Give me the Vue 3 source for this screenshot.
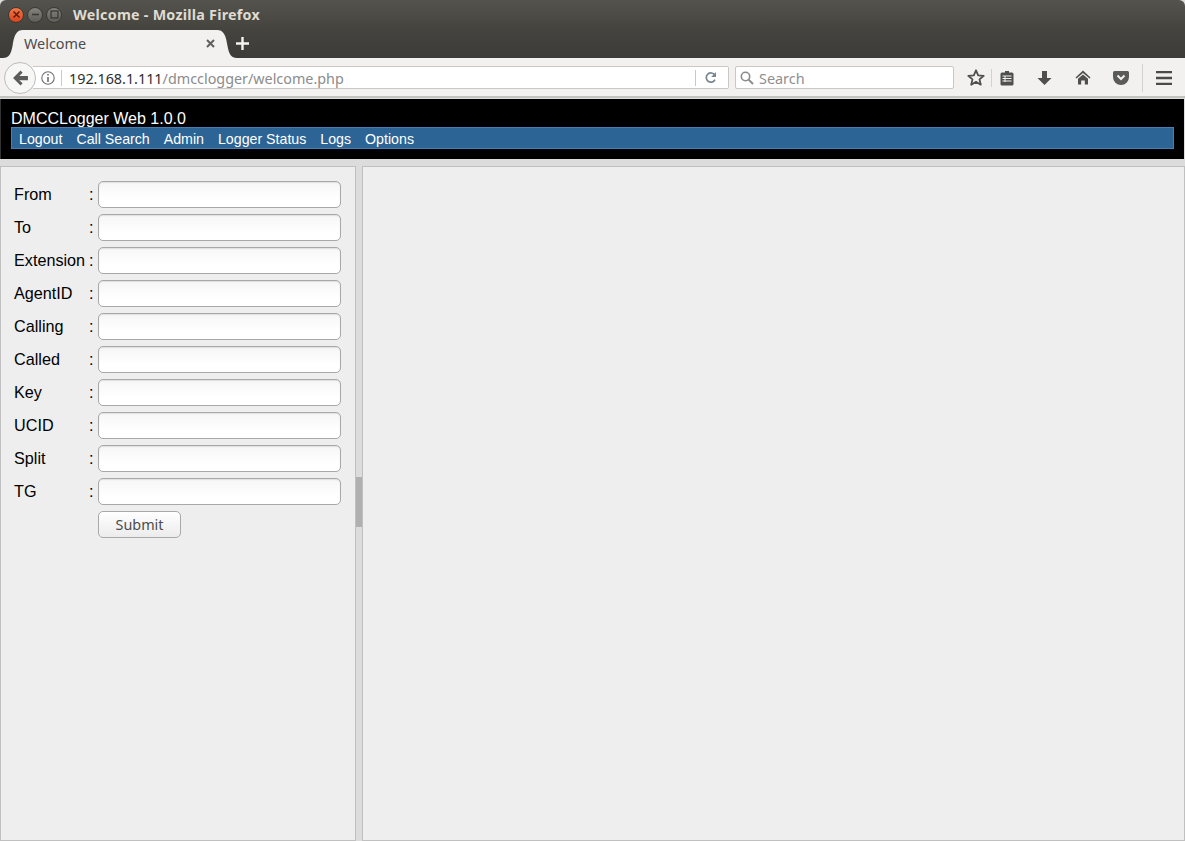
<template>
  <div class="page">
    <div class="titlebar">
      <div class="win-buttons">
        <span class="win-btn close">
          <svg width="9" height="9" viewBox="0 0 9 9"><path d="M1.500 1.500l6 6M7.500 1.500l-6 6" stroke="#5e1c08" stroke-width="1.500" /></svg>
        </span>
        <span class="win-btn">
          <svg width="9" height="9" viewBox="0 0 9 9"><path d="M1 4.500h7" stroke="#3a3935" stroke-width="1.600" /></svg>
        </span>
        <span class="win-btn">
          <svg width="9" height="9" viewBox="0 0 9 9"><rect x="1" y="1" width="7" height="7" fill="none" stroke="#3a3935" stroke-width="1.300" /></svg>
        </span>
      </div>
      <span class="win-title">Welcome - Mozilla Firefox</span>
    </div>

    <div class="tabbar">
      <div class="tab">
        <svg class="tab-curve" width="20" height="28" viewBox="0 0 20 28"><path d="M0 28C6 28 8 24 9.500 16 11 6 13 0 20 0V28Z" fill="#f2f1f0" /></svg>
        <div class="tab-body">
          <span class="tab-label">Welcome</span>
          <svg width="9" height="9" viewBox="0 0 9 9"><path d="M1 1l7 7M8 1l-7 7" stroke="#5f5f5c" stroke-width="2" /></svg>
        </div>
        <svg class="tab-curve" width="20" height="28" viewBox="0 0 20 28"><path d="M20 28C14 28 12 24 10.500 16 9 6 7 0 0 0V28Z" fill="#f2f1f0" /></svg>
      </div>
      <svg class="new-tab" width="13" height="13" viewBox="0 0 13 13"><path d="M6.500 0v13M0 6.500h13" stroke="#f4f4f2" stroke-width="2.400" /></svg>
    </div>

    <div class="navbar">
      <div class="back-btn">
        <svg width="17" height="16" viewBox="0 0 16 15"><path d="M8 0.500 1 7.500 8 14.500 10 12.500 6.800 9.500H15V5.500H6.800L10 2.500Z" fill="#5c5c5c" /></svg>
      </div>
      <div class="urlbar">
        <svg class="info" width="14" height="14" viewBox="0 0 14 14">
          <circle cx="7" cy="7" r="6.200" fill="none" stroke="#6e6e6e" stroke-width="1.100" />
          <path d="M6.200 3h1.600v1.600H6.200zM6.200 6h1.600v5H6.200z" fill="#6e6e6e" />
        </svg>
        <span class="sep"></span>
        <span class="url"><span class="host">192.168.1.111</span>/dmcclogger/welcome.php</span>
        <span class="sep right"></span>
        <svg class="reload" width="13" height="13" viewBox="0 0 13 13">
          <path d="M10.800 4.200A4.600 4.600 0 1 0 11 8.600" fill="none" stroke="#7a8791" stroke-width="1.700" />
          <path d="M12 1v5H7.200Z" fill="#7a8791" />
        </svg>
      </div>
      <div class="searchbar">
        <svg width="14" height="14" viewBox="0 0 14 14">
          <circle cx="5.500" cy="5.500" r="4.200" fill="none" stroke="#8a8a8a" stroke-width="1.600" />
          <path d="M8.600 8.600l4.400 4.400" stroke="#8a8a8a" stroke-width="2" />
        </svg>
        <span class="search-text">Search</span>
      </div>
      <div class="tools">
        <svg class="t-star" width="18" height="17" viewBox="0 0 18 17"><path d="M9 1.300 11.200 6.300 16.700 6.800 12.500 10.400 13.800 15.700 9 12.900 4.200 15.700 5.500 10.400 1.300 6.800 6.800 6.300Z" fill="none" stroke="#4f4f4f" stroke-width="1.800" stroke-linejoin="round" /></svg>
        <span class="t-sep"></span>
        <svg class="t-list" width="14" height="16" viewBox="0 0 14 16">
          <path d="M2 2.500h3V1h4v1.500h3a1.500 1.500 0 0 1 1.500 1.500v10a1.500 1.500 0 0 1-1.500 1.500H2A1.500 1.500 0 0 1 .5 14V4A1.500 1.500 0 0 1 2 2.500Z" fill="#4f4f4f" />
          <path d="M2.500 5.500h9v1h-9zM2.500 8h9v1h-9zM2.500 10.500h9v1h-9zM4.500 5.500h1v6.500h-1z" fill="#f2f1f0" />
        </svg>
        <svg class="t-down" width="15" height="16" viewBox="0 0 15 16"><path d="M5 1h5v7h4.500L7.500 15 .5 8H5Z" fill="#4f4f4f" /></svg>
        <svg class="t-home" width="16" height="15" viewBox="0 0 16 15">
          <path d="M8 .5 15.500 7.500 14.500 8.500 8 3 1.500 8.500.5 7.500Z" fill="#4f4f4f" />
          <path d="M8 4.500 13 8.800V14.500H9.800V10.500H6.200V14.500H3V8.800Z" fill="#4f4f4f" />
        </svg>
        <svg class="t-pocket" width="16" height="14" viewBox="0 0 16 14">
          <path d="M1.500 0h13A1.500 1.500 0 0 1 16 1.500V6a8 8 0 0 1-16 0V1.500A1.500 1.500 0 0 1 1.500 0Z" fill="#5a5a5a" />
          <path d="M4.500 4.500 8 8l3.500-3.500" fill="none" stroke="#f2f1f0" stroke-width="2" />
        </svg>
        <span class="t-sep wide"></span>
        <svg class="t-menu" width="16" height="14" viewBox="0 0 16 14"><path d="M0 1.200h16M0 7h16M0 12.800h16" stroke="#4a4a4a" stroke-width="2.300" /></svg>
      </div>
    </div>

    <div class="content">
      <header class="app-header">
        <div class="app-title">DMCCLogger Web 1.0.0</div>
        <nav class="menu">
          <a v-for="item in menu" :key="item">{{ item }}</a>
        </nav>
      </header>

      <div class="panes">
        <form class="left-pane" @submit.prevent>
          <div v-for="f in fields" :key="f" class="form-row">
            <label>{{ f }}</label>
            <span class="colon">:</span>
            <input type="text">
          </div>
          <button type="submit" class="submit">Submit</button>
        </form>
        <div class="splitter"><span class="grip"></span></div>
        <div class="right-pane"></div>
      </div>
    </div>
  </div>
</template>

<script setup>
const menu = ['Logout', 'Call Search', 'Admin', 'Logger Status', 'Logs', 'Options']
const fields = ['From', 'To', 'Extension', 'AgentID', 'Calling', 'Called', 'Key', 'UCID', 'Split', 'TG']
</script>

<style>
html, body {
  margin: 0;
  height: 100%;
  overflow: hidden;
}
</style>

<style scoped>
.page {
  width: 1185px;
  height: 841px;
  display: flex;
  flex-direction: column;
  background: #dcdcdc;
  font-family: "Liberation Sans", Arial, sans-serif;
  overflow: hidden;
}

.titlebar {
  height: 28px;
  display: flex;
  align-items: center;
  background: linear-gradient(#55534d, #46443f);
  border-radius: 6px 6px 0 0;
  box-sizing: border-box;
  padding-top: 1px;
}

.win-buttons {
  display: flex;
  gap: 3px;
  margin-left: 8px;
}

.win-btn {
  width: 16px;
  height: 16px;
  box-sizing: border-box;
  border-radius: 50%;
  display: flex;
  align-items: center;
  justify-content: center;
  background: linear-gradient(#85837c, #5f5d57);
  border: 1px solid #3a3935;
}

.win-btn.close {
  background: linear-gradient(#f2794a, #d9431a);
}

.win-title {
  margin-left: 11px;
  font-family: "Noto Sans", sans-serif;
  font-size: 14.300px;
  letter-spacing: 0.25px;
  font-weight: 700;
  color: #dfdbd2;
}

.tabbar {
  height: 30px;
  display: flex;
  align-items: flex-end;
  background: linear-gradient(#46443f, #3c3b37);
}

.tab {
  margin-left: 3px;
  height: 28px;
  display: flex;
}

.tab-curve {
  flex: none;
}

.tab-body {
  width: 194px;
  box-sizing: border-box;
  display: flex;
  align-items: center;
  justify-content: space-between;
  padding: 0 2px 2px 1px;
  background: #f2f1f0;
}

.tab-label {
  font-family: "Noto Sans", sans-serif;
  font-size: 14.400px;
  color: #4c4c4c;
}

.new-tab {
  margin: 0 0 8px -1px;
}

.navbar {
  height: 40px;
  box-sizing: border-box;
  display: flex;
  align-items: center;
  background: #f2f1f0;
  border-bottom: 2px solid #c4c2bd;
  padding-top: 1px;
}

.back-btn {
  width: 30px;
  height: 30px;
  flex: none;
  margin-left: 4px;
  border: 1px solid #bdbcb8;
  border-radius: 50%;
  background: #f7f7f6;
  display: flex;
  align-items: center;
  justify-content: center;
  z-index: 1;
}

.urlbar {
  width: 696px;
  height: 23px;
  box-sizing: border-box;
  margin-left: -3px;
  padding-left: 8px;
  display: flex;
  align-items: center;
  background: #fff;
  border: 1px solid #c9c8c4;
  border-left: none;
  border-radius: 0 2px 2px 0;
}

.sep {
  width: 1px;
  height: 16px;
  background: #c9c8c4;
  margin: 0 7px 0 6px;
  flex: none;
}

.url {
  flex: 1;
  padding-top: 1px;
  font-family: "Noto Sans", sans-serif;
  font-size: 14.350px;
  color: #8c8c8c;
  white-space: nowrap;
}

.host {
  color: #2e2e2e;
}

.sep.right {
  margin: 0;
}

.reload {
  margin: 0 11px 0 8px;
}

.searchbar {
  width: 219px;
  height: 23px;
  box-sizing: border-box;
  margin-left: 6px;
  padding-left: 4px;
  display: flex;
  align-items: center;
  gap: 5px;
  background: #fff;
  border: 1px solid #c9c8c4;
  border-radius: 2px;
  font-family: "Noto Sans", sans-serif;
  font-size: 14.400px;
  color: #8f8f8f;
}

.search-text {
  padding-top: 1px;
}

.tools {
  display: flex;
  align-items: center;
  flex: 1;
}

.t-star { margin-left: 13px; }
.t-sep {
  width: 1px;
  height: 18px;
  background: #d3d2ce;
  margin-left: 6px;
}
.t-list { margin-left: 8px; }
.t-down { margin-left: 23px; }
.t-home { margin-left: 23px; }
.t-pocket { margin-left: 22px; }
.t-sep.wide {
  height: 28px;
  margin-left: 13px;
}
.t-menu { margin-left: 13px; }

.content {
  flex: 1;
  min-height: 0;
  display: flex;
  flex-direction: column;
}

.app-header {
  height: 60px;
  margin-top: 1px;
  box-sizing: border-box;
  padding: 11px 10px 0;
  background: #000;
  border-left: 1px solid #333;
  border-right: 1px solid #ddd;
  flex: none;
}

.app-title {
  color: #fff;
  font-size: 16px;
  line-height: 17px;
}

.menu {
  height: 22px;
  box-sizing: border-box;
  display: flex;
  align-items: center;
  gap: 14px;
  padding: 1px 7px 0;
  background: #2d6496;
  border: 1px solid #4a7eb0;
  color: #fff;
  font-size: 14.200px;
}

.panes {
  flex: 1;
  min-height: 0;
  display: flex;
  margin-top: 7px;
}

.left-pane {
  width: 356px;
  box-sizing: border-box;
  padding: 14px 0 0 13px;
  background: #eee;
  border: 1px solid #c0c0c0;
  margin-bottom: 0;
  display: flex;
  flex-direction: column;
  gap: 6px;
}

.form-row {
  height: 27px;
  display: flex;
  align-items: center;
  font-size: 16.200px;
  color: #000;
}

.form-row label {
  width: 75px;
}

.colon {
  width: 9px;
}

.form-row input {
  width: 243px;
  height: 27px;
  box-sizing: border-box;
  border: 1px solid #a8a8a8;
  border-radius: 5px;
  background: linear-gradient(#f6f6f6, #fff 70%);
  box-shadow: inset 0 1px 1px #e0e0e0;
  padding: 0 4px;
  margin: 0;
}

.submit {
  width: 83px;
  height: 27px;
  margin-left: 84px;
  padding: 0;
  border: 1px solid #a8a8a8;
  border-radius: 5px;
  background: linear-gradient(#fff, #ececec);
  font-family: "Noto Sans", sans-serif;
  font-size: 14.400px;
  color: #4c4c4c;
}

.splitter {
  width: 6px;
  flex: none;
  display: flex;
  align-items: center;
}

.grip {
  width: 6px;
  height: 50px;
  margin-top: -3px;
  background: #b0b0b0;
}

.right-pane {
  flex: 1;
  background: #eee;
  border: 1px solid #c0c0c0;
}
</style>
